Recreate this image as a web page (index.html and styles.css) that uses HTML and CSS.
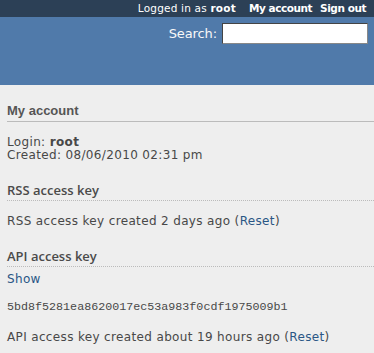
FILE: index.html
```html
<!DOCTYPE html>
<html lang="en">
<head>
    <meta charset="UTF-8">
    <title>My account</title>
    <link rel="stylesheet" href="styles.css">
</head>
<body>
    <div id="top-menu">
        <div id="loggedas">Logged in as <a href="#" class="user">root</a></div>
        <ul>
            <li><a href="#">My account</a></li>
            <li><a href="#">Sign out</a></li>
        </ul>
    </div>

    <div id="header">
        <div id="quick-search">
            <label for="q">Search:</label>
            <input type="text" id="q" class="search">
        </div>
    </div>

    <div id="sidebar">
        <h3>My account</h3>
        <p>Login: <strong>root</strong><br>
        Created: 08/06/2010 02:31 pm</p>

        <h4>RSS access key</h4>
        <p>RSS access key created 2 days ago (<a href="#">Reset</a>)</p>

        <h4>API access key</h4>
        <div><a href="#">Show</a></div>
        <pre>5bd8f5281ea8620017ec53a983f0cdf1975009b1</pre>
        <p>API access key created about 19 hours ago (<a href="#">Reset</a>)</p>
    </div>
</body>
</html>
```

FILE: styles.css
```css
body {
    margin: 0;
    padding: 0;
    font-family: "DejaVu Sans", Verdana, sans-serif;
    font-size: 12px;
    letter-spacing: 0.35px;
    color: #484848;
    background: #eeeeee;
}
a {
    color: #2a5685;
    text-decoration: none;
}

#top-menu {
    background: #2c4056;
    color: #fff;
    height: 17px;
    font-size: 10.5px;
    letter-spacing: 0.2px;
    line-height: 17px;
    padding: 0 8px 0 0;
    display: flex;
    justify-content: flex-end;
}
#top-menu a {
    color: #fff;
    font-weight: bold;
}
#top-menu ul {
    margin: 0;
    padding: 0;
    list-style: none;
    display: flex;
}
#top-menu li {
    margin-left: 8px;
    letter-spacing: -0.45px;
}
#loggedas {
    margin-right: 5px;
}

#header {
    background: #507aaa;
    color: #f8f8f8;
    height: 68px;
    box-sizing: border-box;
    padding: 5px 6px 0 0;
    display: flex;
    justify-content: flex-end;
}
#quick-search {
    display: flex;
    align-items: center;
    height: 22px;
}
#quick-search label {
    font-size: 13px;
    letter-spacing: -0.1px;
    margin-right: 5px;
}
#quick-search input {
    width: 146px;
    height: 21px;
    box-sizing: border-box;
    margin: 0;
    border: 1px solid #888;
    border-top-color: #444;
    border-left-color: #444;
    background: #fff;
}

#sidebar {
    padding: 18px 0 0 7px;
}
#sidebar h3 {
    font-family: "Liberation Sans", Arial, sans-serif;
    font-size: 13px;
    font-weight: bold;
    letter-spacing: 0;
    color: #555;
    margin: 0 0 14px 0;
    padding: 0 0 3px 0;
    border-bottom: 1px solid #bbb;
}
#sidebar h4 {
    font-family: "Open Sans", sans-serif;
    font-size: 13px;
    font-weight: 600;
    letter-spacing: 0;
    color: #4a4a4a;
    margin: 0 0 5px 0;
    padding: 0 0 1px 0;
    border-bottom: 1px dotted #bbb;
}
#sidebar p {
    margin: 0 0 19px 0;
    line-height: 13px;
}
#sidebar h4 + p {
    margin-top: 14px;
}
#sidebar pre {
    font-family: "Liberation Mono", "Courier New", monospace;
    font-size: 11.7px;
    letter-spacing: 0;
    margin: 14px 0 17px 0;
}
```
